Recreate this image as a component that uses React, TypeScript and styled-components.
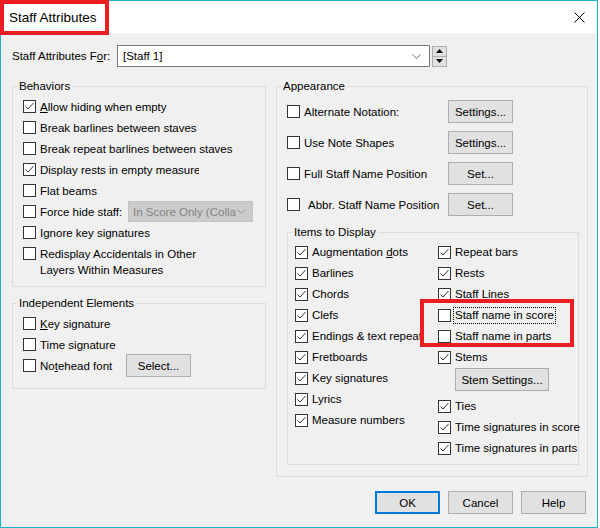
import React from 'react'
import styled, { createGlobalStyle } from 'styled-components'

const GlobalStyle = createGlobalStyle`
  html, body {
    margin: 0;
    padding: 0;
    background: #ffffff;
  }
  body {
    font-family: "Liberation Sans", Arial, sans-serif;
    font-size: 11.5px;
    color: #000;
  }
  * {
    box-sizing: border-box;
  }
`

const Window = styled.div`
  width: 598px;
  height: 528px;
  border: 1px solid #1ab3ca;
  background: #f0f0f0;
  display: flex;
  flex-direction: column;
`

const TitleBar = styled.div`
  height: 32px;
  flex: none;
  background: #fff;
  display: flex;
  align-items: flex-start;
  justify-content: space-between;
`

// red annotation frame drawn round the title
const TitleMark = styled.div`
  margin: -1px 0 0 -1px;
  width: 109px;
  height: 35px;
  border: 4px solid #ec1c24;
  padding-left: 5px;
  display: flex;
  align-items: center;
  font-size: 13.5px;
  background: #fff;
`

const CloseButton = styled.button`
  margin: 11px 12px 0 0;
  width: 11px;
  height: 11px;
  padding: 0;
  border: none;
  background: none;
  display: flex;
`

const Body = styled.div`
  flex: 1;
  padding: 12px 11px 0 11px;
  display: flex;
  flex-direction: column;
`

const TopRow = styled.div`
  display: flex;
  align-items: center;
  height: 22px;
`

const ForLabel = styled.span`
  width: 105px;
  white-space: nowrap;
`

const Combo = styled.div`
  width: 313px;
  height: 22px;
  border: 1px solid #7a7a7a;
  background: #fff;
  padding: 0 8px 0 5px;
  display: flex;
  align-items: center;
  justify-content: space-between;
`

const Spin = styled.div`
  margin-left: 2px;
  width: 15px;
  height: 21px;
  display: flex;
  flex-direction: column;
`

const SpinHalf = styled.div`
  flex: 1;
  border: 1px solid #adadad;
  background: #e1e1e1;
  display: flex;
  align-items: center;
  justify-content: center;

  & + & {
    border-top: none;
  }
`

const Columns = styled.div`
  display: grid;
  grid-template-columns: 254px 312px;
  column-gap: 10px;
  margin-top: 12px;
  align-items: start;
`

const LeftColumn = styled.div`
  display: flex;
  flex-direction: column;
  gap: 9px;
`

const Group = styled.fieldset<{ $margin?: string }>`
  margin: ${(p) => p.$margin ?? '0'};
  padding: 0;
  border: 1px solid #dcdcdc;
  min-width: 0;
`

const Legend = styled.legend`
  padding: 0 2px;
  margin-left: 4px;
  line-height: 14px;
`

const Row = styled.div<{ $h?: number; $top?: boolean }>`
  display: flex;
  align-items: ${(p) => (p.$top ? 'flex-start' : 'center')};
  height: ${(p) => p.$h ?? 21}px;
`

const Box = styled.span<{ $top?: number }>`
  width: 13px;
  height: 13px;
  flex: none;
  border: 1px solid #333;
  background: #fff;
  margin-right: 4px;
  margin-top: ${(p) => p.$top ?? 0}px;
  display: flex;
  align-items: center;
  justify-content: center;
`

const Text = styled.span<{ $w?: number; $lh?: number; $indent?: number; $clip?: number }>`
  white-space: nowrap;
  width: ${(p) => (p.$w ? `${p.$w}px` : 'auto')};
  max-width: ${(p) => (p.$clip ? `${p.$clip}px` : 'none')};
  overflow: ${(p) => (p.$clip ? 'hidden' : 'visible')};
  line-height: ${(p) => (p.$lh ? `${p.$lh}px` : 'normal')};
  padding-left: ${(p) => p.$indent ?? 0}px;
  flex: none;
`

const Focused = styled.span`
  border: 1px dotted #000;
  padding: 0 1px;
  margin-left: -2px;
  line-height: 15px;
  white-space: nowrap;
`

const Button = styled.button<{ $w?: number; $default?: boolean }>`
  width: ${(p) => p.$w ?? 65}px;
  height: 23px;
  flex: none;
  padding: 0;
  font: inherit;
  color: #000;
  background: #e1e1e1;
  border: 1px solid ${(p) => (p.$default ? '#0078d7' : '#adadad')};
  box-shadow: ${(p) => (p.$default ? 'inset 0 0 0 1px #0078d7' : 'none')};
`

const DisabledSelect = styled.div`
  width: 125px;
  height: 21px;
  flex: none;
  background: #cccccc;
  border: 1px solid #c4c4c4;
  color: #848484;
  padding: 0 6px 0 4px;
  display: flex;
  align-items: center;
  justify-content: space-between;
  overflow: hidden;

  span {
    white-space: nowrap;
    overflow: hidden;
    width: 103px;
  }
`

const BehaviorsBody = styled.div`
  padding: 3px 0 6px 10px;
`

const IndependentBody = styled.div`
  padding: 3px 0 12px 10px;
`

const AppearanceBody = styled.div`
  padding: 3px 0 0 10px;
`

const ItemsGrid = styled.div`
  display: grid;
  grid-template-columns: 143px 1fr;
  padding: 2.5px 0 5.5px 7px;
  align-items: start;
`

const ItemsColumn = styled.div`
  position: relative;
  display: flex;
  flex-direction: column;
`

const StemButtonRow = styled.div`
  margin: 0.5px 0 4.5px 17px;
  display: flex;
`

// red annotation frame over the two staff-name rows
const Highlight = styled.div`
  position: absolute;
  left: -18px;
  top: 57.5px;
  width: 154px;
  height: 48px;
  border: 4px solid #ec1c24;
  pointer-events: none;
`

const Footer = styled.div`
  display: flex;
  justify-content: flex-end;
  gap: 8px;
  margin-top: 14px;
`

const CheckMark = () => (
  <svg width="11" height="11" viewBox="0 0 11 11">
    <polyline points="1.5,5.5 4,8 9.5,2" fill="none" stroke="#333" strokeWidth="1" />
  </svg>
)

const Chevron = ({ color }: { color: string }) => (
  <svg width="9" height="5" viewBox="0 0 9 5">
    <polyline points="0.5,0.5 4.5,4.5 8.5,0.5" fill="none" stroke={color} strokeWidth="1" />
  </svg>
)

type CheckProps = {
  checked?: boolean
  children: React.ReactNode
  w?: number
  clip?: number
  indent?: number
  after?: React.ReactNode
}

const CheckRow: React.FC<CheckProps> = ({ checked, children, w, clip, indent, after }) => (
  <Row>
    <Box>{checked && <CheckMark />}</Box>
    <Text $w={w} $clip={clip} $indent={indent}>
      {children}
    </Text>
    {after}
  </Row>
)

export default function App() {
  return (
    <>
      <GlobalStyle />
      <Window>
        <TitleBar>
          <TitleMark>Staff Attributes</TitleMark>
          <CloseButton>
            <svg width="11" height="11" viewBox="0 0 11 11">
              <path d="M0.5 0.5 L10.5 10.5 M10.5 0.5 L0.5 10.5" stroke="#000" strokeWidth="1" />
            </svg>
          </CloseButton>
        </TitleBar>
        <Body>
          <TopRow>
            <ForLabel>
              Staff Attributes F<u>o</u>r:
            </ForLabel>
            <Combo>
              <span>[Staff 1]</span>
              <Chevron color="#707070" />
            </Combo>
            <Spin>
              <SpinHalf>
                <svg width="7" height="4" viewBox="0 0 7 4">
                  <polygon points="0,4 3.5,0 7,4" fill="#000" />
                </svg>
              </SpinHalf>
              <SpinHalf>
                <svg width="7" height="4" viewBox="0 0 7 4">
                  <polygon points="0,0 3.5,4 7,0" fill="#000" />
                </svg>
              </SpinHalf>
            </Spin>
          </TopRow>

          <Columns>
            <LeftColumn>
              <Group>
                <Legend>Behaviors</Legend>
                <BehaviorsBody>
                  <CheckRow checked>
                    <u>A</u>llow hiding when empty
                  </CheckRow>
                  <CheckRow>Break barlines between staves</CheckRow>
                  <CheckRow>Break repeat barlines between staves</CheckRow>
                  <CheckRow checked clip={159}>
                    Display rests in empty measures
                  </CheckRow>
                  <CheckRow>Flat beams</CheckRow>
                  <CheckRow
                    w={88}
                    after={
                      <DisabledSelect>
                        <span>In Score Only (Collapse)</span>
                        <Chevron color="#9a9a9a" />
                      </DisabledSelect>
                    }
                  >
                    Force hide staff:
                  </CheckRow>
                  <CheckRow>Ignore key signatures</CheckRow>
                  <Row $h={37} $top>
                    <Box $top={4} />
                    <Text $lh={16} style={{ paddingTop: 3 }}>
                      Redisplay Accidentals in Other
                      <br />
                      Layers Within Measures
                    </Text>
                  </Row>
                </BehaviorsBody>
              </Group>

              <Group>
                <Legend>Independent Elements</Legend>
                <IndependentBody>
                  <CheckRow>
                    <u>K</u>ey signature
                  </CheckRow>
                  <CheckRow>Time signature</CheckRow>
                  <CheckRow w={86} after={<Button>Select...</Button>}>
                    No<u>t</u>ehead font
                  </CheckRow>
                </IndependentBody>
              </Group>
            </LeftColumn>

            <Group>
              <Legend>Appearance</Legend>
              <AppearanceBody>
                <Row $h={31}>
                  <Box />
                  <Text $w={144}>Alternate Notation:</Text>
                  <Button>Settings...</Button>
                </Row>
                <Row $h={31}>
                  <Box />
                  <Text $w={144}>Use Note Shapes</Text>
                  <Button>Settings...</Button>
                </Row>
                <Row $h={31}>
                  <Box />
                  <Text $w={144}>Full Staff Name Position</Text>
                  <Button>Set...</Button>
                </Row>
                <Row $h={31}>
                  <Box />
                  <Text $w={144} $indent={4}>
                    Abbr. Staff Name Position
                  </Text>
                  <Button>Set...</Button>
                </Row>
              </AppearanceBody>

              <Group $margin="5px 8px 11px 10px">
                <Legend>Items to Display</Legend>
                <ItemsGrid>
                  <ItemsColumn>
                    <CheckRow checked>
                      Augmentation <u>d</u>ots
                    </CheckRow>
                    <CheckRow checked>Barlines</CheckRow>
                    <CheckRow checked>Chords</CheckRow>
                    <CheckRow checked>Clefs</CheckRow>
                    <CheckRow checked clip={109}>
                      Endings &amp; text repeats
                    </CheckRow>
                    <CheckRow checked>Fretboards</CheckRow>
                    <CheckRow checked>Key signatures</CheckRow>
                    <CheckRow checked>Lyrics</CheckRow>
                    <CheckRow checked>Measure numbers</CheckRow>
                  </ItemsColumn>
                  <ItemsColumn>
                    <CheckRow checked>Repeat bars</CheckRow>
                    <CheckRow checked>Rests</CheckRow>
                    <CheckRow checked>Staff Lines</CheckRow>
                    <Row>
                      <Box />
                      <Focused>Staff name in score</Focused>
                    </Row>
                    <CheckRow>Staff name in parts</CheckRow>
                    <CheckRow checked>Stems</CheckRow>
                    <StemButtonRow>
                      <Button $w={94}>Stem Settings...</Button>
                    </StemButtonRow>
                    <CheckRow checked>Ties</CheckRow>
                    <CheckRow checked>Time signatures in score</CheckRow>
                    <CheckRow checked>Time signatures in parts</CheckRow>
                    <Highlight />
                  </ItemsColumn>
                </ItemsGrid>
              </Group>
            </Group>
          </Columns>

          <Footer>
            <Button $default>OK</Button>
            <Button>Cancel</Button>
            <Button>Help</Button>
          </Footer>
        </Body>
      </Window>
    </>
  )
}
